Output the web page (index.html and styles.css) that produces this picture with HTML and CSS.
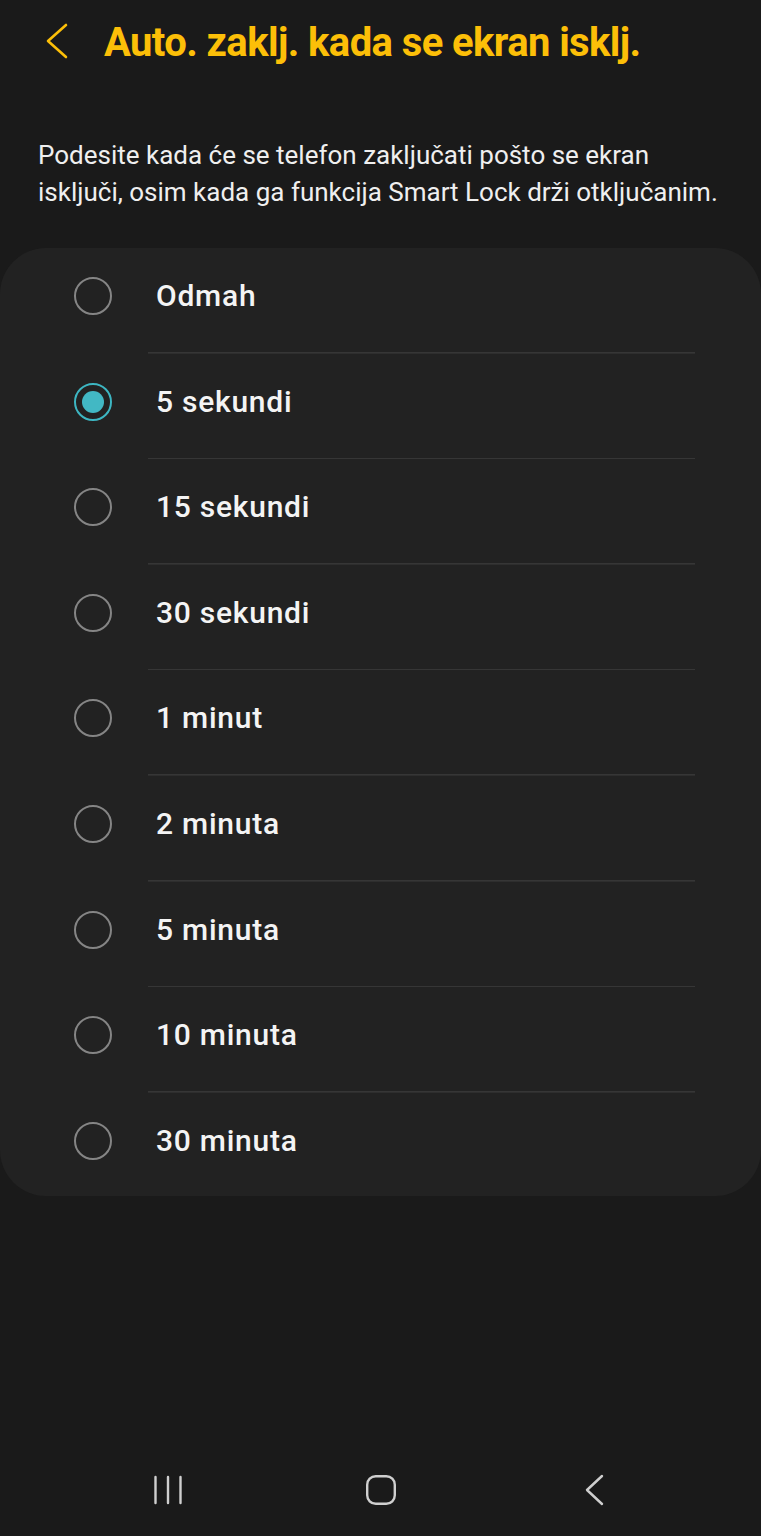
FILE: index.html
```html
<!DOCTYPE html>
<html lang="sr-Latn">
<head>
<meta charset="utf-8">
<title>Auto. zaklj. kada se ekran isklj.</title>
<link rel="stylesheet" href="styles.css">
</head>
<body>
<div class="screen">
  <header class="appbar">
    <svg class="back" width="22" height="36" viewBox="0 0 22 36" aria-hidden="true">
      <path d="M20 2 L2 18 L20 34" fill="none" stroke="#fcbf08" stroke-width="2.6" stroke-linecap="round" stroke-linejoin="round"/>
    </svg>
    <h1 class="title">Auto. zaklj. kada se ekran isklj.</h1>
  </header>

  <p class="desc">Podesite kada će se telefon zaključati pošto se ekran isključi, osim kada ga funkcija Smart Lock drži otključanim.</p>

  <ul class="options">
    <li class="option"><span class="radio"></span><span class="label">Odmah</span></li>
    <li class="option"><span class="radio checked"></span><span class="label">5 sekundi</span></li>
    <li class="option"><span class="radio"></span><span class="label">15 sekundi</span></li>
    <li class="option"><span class="radio"></span><span class="label">30 sekundi</span></li>
    <li class="option"><span class="radio"></span><span class="label">1 minut</span></li>
    <li class="option"><span class="radio"></span><span class="label">2 minuta</span></li>
    <li class="option"><span class="radio"></span><span class="label">5 minuta</span></li>
    <li class="option"><span class="radio"></span><span class="label">10 minuta</span></li>
    <li class="option"><span class="radio"></span><span class="label">30 minuta</span></li>
  </ul>

  <nav class="navbar">
    <div class="navbtn">
      <svg width="30" height="32" viewBox="0 0 30 32" aria-hidden="true">
        <path d="M2.5 3 V29 M15 3 V29 M27.5 3 V29" fill="none" stroke="#cfcfcf" stroke-width="2.4" stroke-linecap="round"/>
      </svg>
    </div>
    <div class="navbtn">
      <svg width="32" height="32" viewBox="0 0 32 32" aria-hidden="true">
        <rect x="2.2" y="2.2" width="27.6" height="27.6" rx="8.5" fill="none" stroke="#cfcfcf" stroke-width="2.4"/>
      </svg>
    </div>
    <div class="navbtn">
      <svg width="22" height="32" viewBox="0 0 22 32" aria-hidden="true">
        <path d="M19 2 L4 16 L19 30" fill="none" stroke="#cfcfcf" stroke-width="2.4" stroke-linecap="round" stroke-linejoin="round"/>
      </svg>
    </div>
  </nav>
</div>
</body>
</html>
```

FILE: styles.css
```css
* {
  box-sizing: border-box;
}

html, body {
  margin: 0;
  padding: 0;
  background: #1a1a1a;
}

body {
  font-family: Roboto, "Noto Sans", "Liberation Sans", sans-serif;
  color: #f2f2f2;
}

.screen {
  width: 761px;
  min-height: 1536px;
  display: flex;
  flex-direction: column;
  background: #1a1a1a;
}

.appbar {
  display: flex;
  align-items: center;
  padding: 19px 0 0 46px;
}

.back {
  flex: none;
  margin-bottom: 4px;
}

.title {
  margin: 0 0 0 36px;
  font-size: 40px;
  line-height: 48px;
  font-weight: 700;
  color: #fcbf08;
  letter-spacing: -0.6px;
  white-space: nowrap;
}

.desc {
  margin: 70px 30px 0 38px;
  font-size: 26px;
  line-height: 37px;
  color: #efefef;
  letter-spacing: 0;
}

.options {
  list-style: none;
  margin: 37px 0 0 0;
  padding: 0 0 7px 0;
  background: #222222;
  border-radius: 46px;
}

.option {
  height: 105.6px;
  padding: 0 0 9.6px 73.5px;
  display: flex;
  align-items: center;
}

.option:not(:last-child) {
  background-image: linear-gradient(#363636, #363636);
  background-repeat: no-repeat;
  background-size: 547px 1.6px;
  background-position: 148px 104px;
}

.option:last-child {
  height: 96px;
  padding-bottom: 0;
}

.radio {
  flex: none;
  width: 38px;
  height: 38px;
  border-radius: 50%;
  border: 2px solid #858585;
  display: flex;
  align-items: center;
  justify-content: center;
}

.radio.checked {
  border-color: #3db6c2;
}

.radio.checked::after {
  content: "";
  width: 22px;
  height: 22px;
  border-radius: 50%;
  background: #42b8c4;
}

.label {
  margin-left: 44.5px;
  font-size: 30px;
  line-height: 36px;
  font-weight: 500;
  color: #f4f4f4;
  letter-spacing: 0.75px;
}

.navbar {
  margin-top: auto;
  height: 92px;
  padding: 0 61px;
  display: grid;
  grid-template-columns: repeat(3, 1fr);
  align-items: center;
}

.navbtn {
  display: flex;
  justify-content: center;
  align-items: center;
}
```
